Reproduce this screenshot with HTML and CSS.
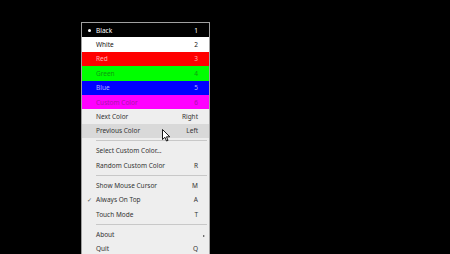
FILE: index.html
```html
<!DOCTYPE html>
<html>
<head>
<meta charset="utf-8">
<link rel="stylesheet" href="styles.css">
</head>
<body>
<div class="menu">
  <div class="item c-black"><span class="ind"><span class="dot"></span></span><span class="label">Black</span><span class="key">1</span></div>
  <div class="item c-white"><span class="ind"></span><span class="label">White</span><span class="key">2</span></div>
  <div class="item c-red"><span class="ind"></span><span class="label">Red</span><span class="key">3</span></div>
  <div class="item c-green"><span class="ind"></span><span class="label">Green</span><span class="key">4</span></div>
  <div class="item c-blue"><span class="ind"></span><span class="label">Blue</span><span class="key">5</span></div>
  <div class="item c-magenta"><span class="ind"></span><span class="label">Custom Color</span><span class="key">6</span></div>
  <div class="item"><span class="ind"></span><span class="label">Next Color</span><span class="key">Right</span></div>
  <div class="item hover"><span class="ind"></span><span class="label">Previous Color</span><span class="key">Left</span>
    <svg class="cursor" width="9" height="13" viewBox="0 0 9 13"><path d="M0.5 0.5 L0.5 10.5 L2.9 8.3 L4.5 12 L6 11.4 L4.5 7.8 L7.8 7.8 Z" fill="#fff" stroke="#000" stroke-width="0.9" stroke-linejoin="round"/></svg>
  </div>
  <div class="sep"></div>
  <div class="item"><span class="ind"></span><span class="label">Select Custom Color...</span><span class="key"></span></div>
  <div class="item"><span class="ind"></span><span class="label">Random Custom Color</span><span class="key">R</span></div>
  <div class="sep"></div>
  <div class="item"><span class="ind"></span><span class="label">Show Mouse Cursor</span><span class="key">M</span></div>
  <div class="item"><span class="ind check">✓</span><span class="label">Always On Top</span><span class="key">A</span></div>
  <div class="item"><span class="ind"></span><span class="label">Touch Mode</span><span class="key">T</span></div>
  <div class="sep"></div>
  <div class="item"><span class="ind"></span><span class="label">About</span><span class="key"><span class="arrow"></span></span></div>
  <div class="item"><span class="ind"></span><span class="label">Quit</span><span class="key">Q</span></div>
</div>
</body>
</html>
```
FILE: styles.css
```css
html, body {
  margin: 0;
  padding: 0;
  background: #000;
  height: 254px;
  overflow: hidden;
}
body {
  padding: 22px 0 0 81px;
  box-sizing: border-box;
  font-family: "Noto Sans", "Open Sans", sans-serif;
}
.menu {
  width: 129px;
  box-sizing: border-box;
  background: #eeeeee;
  border: 1px solid #a0a0a0;
  display: flex;
  flex-direction: column;
}
.item {
  position: relative;
  height: 14.4px;
  display: grid;
  grid-template-columns: 14px 1fr auto;
  align-items: center;
  padding-right: 11px;
  font-size: 6.5px;
  color: #333;
  white-space: nowrap;
}
.ind {
  display: flex;
  align-items: center;
  justify-content: center;
  height: 100%;
}
.dot {
  width: 3px;
  height: 3px;
  border-radius: 50%;
  background: #fff;
}
.check {
  font-size: 6px;
  color: #555;
}
.key {
  text-align: right;
}
.arrow {
  display: inline-block;
  width: 0;
  height: 0;
  border-top: 1.5px solid transparent;
  border-bottom: 1.5px solid transparent;
  border-left: 2px solid #444;
  margin-right: -7px;
}
.c-black { background: #000; color: #fff; }
.c-white { background: #fff; color: #111; }
.c-red { background: #ff0000; color: #ffb4b4; }
.c-green { background: #00ff00; color: #109a10; }
.c-blue { background: #0000ff; color: #b0b0ff; }
.c-magenta { background: #ff00ff; color: #a818a8; }
.hover { background: #d9d9d9; }
.sep {
  height: 5.6px;
  display: flex;
  align-items: center;
  padding-left: 14px;
  padding-right: 2px;
}
.sep::before {
  content: "";
  flex: 1;
  height: 1px;
  background: #c8c8c8;
}
.cursor {
  position: absolute;
  left: 80px;
  top: 5px;
}
```
